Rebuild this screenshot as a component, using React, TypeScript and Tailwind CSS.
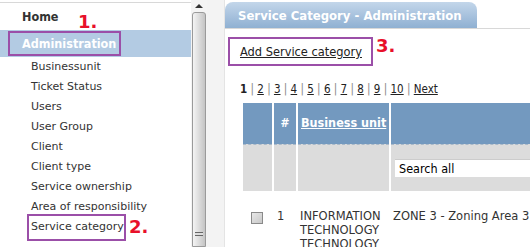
import React from 'react';

const menuItems = [
  'Businessunit',
  'Ticket Status',
  'Users',
  'User Group',
  'Client',
  'Client type',
  'Service ownership',
  'Area of responsibility',
  'Service category',
];

const pages = ['2', '3', '4', '5', '6', '7', '8', '9', '10'];

const condensed = { fontFamily: '"DejaVu Sans Condensed", "DejaVu Sans", Verdana, sans-serif' };

export default function App() {
  return (
    <div
      className="relative flex h-[247px] w-[530px] overflow-hidden bg-white text-[#333]"
      style={{ fontFamily: '"DejaVu Sans", Verdana, sans-serif' }}
    >
      {/* sidebar */}
      <div className="w-[191px] shrink-0 pt-[2px]">
        <div className="border-t border-[#d8d8d8]">
          <div
            className="pl-[22px] pt-[6px] pb-[5px] text-[12.5px] font-bold leading-[16px] text-[#333]"
            style={condensed}
          >
            Home
          </div>
          <div
            className="bg-[#b3cbe3] py-[5px] pl-[22px] text-[12.5px] font-bold leading-[17px] text-white"
            style={condensed}
          >
            Administration
          </div>
          <ul>
            {menuItems.map((item) => (
              <li key={item} className="pl-[31px] text-[11px] leading-[20px] text-[#333]">
                {item}
              </li>
            ))}
          </ul>
        </div>
      </div>

      {/* scrollbar */}
      <div className="flex w-[16px] shrink-0 flex-col bg-[#f4f4f4]">
        <div className="flex h-[12px] items-center justify-center">
          <div className="h-0 w-0 border-x-[4px] border-b-[4px] border-x-transparent border-b-[#333]" />
        </div>
        <div className="mx-[1px] flex flex-1 flex-col justify-end rounded-t-[3px] border border-[#9a9a9a] bg-gradient-to-r from-[#f4f4f4] via-[#dcdcdc] to-[#c4c4c4] pb-[10px]">
          <div className="mx-auto h-[4px] w-[8px] border-y border-[#666] bg-[#ddd]" />
        </div>
      </div>

      {/* gutter */}
      <div className="w-[18px] shrink-0 border-r border-[#e4e4e4] bg-[#f3f3f3]" />

      {/* main panel */}
      <div className="flex-1 pt-[2px]">
        <div className="flex">
          <div
            className="w-[252px] rounded-t-[8px] bg-gradient-to-b from-[#c3d6ea] to-[#8fb0d2] pl-[13px] pt-[6px] pb-[4px] text-[13px] font-bold leading-[16px] text-white"
            style={condensed}
          >
            Service Category - Administration
          </div>
        </div>
        <div className="border-t border-[#d8d8d8] pl-[15px] pt-[10px]">
          <a className="text-[12.7px] leading-[16px] text-[#222] underline" style={condensed}>
            Add Service category
          </a>

          <div className="mt-[18px] text-[11.5px] leading-[16px] text-[#222]" style={condensed}>
            <span className="font-bold">1</span>
            {pages.map((p) => (
              <span key={p}>
                <span className="text-[#888]"> | </span>
                <a className="underline">{p}</a>
              </span>
            ))}
            <span className="text-[#888]"> | </span>
            <a className="underline">Next</a>
          </div>

          <table className="mt-[6px] ml-[3px] w-[300px] table-fixed border-collapse text-[11.5px]">
            <colgroup>
              <col className="w-[30px]" />
              <col className="w-[24px]" />
              <col className="w-[93px]" />
              <col />
            </colgroup>
            <thead>
              <tr className="h-[41px] bg-[#7399bf] text-white" style={condensed}>
                <th className="border-r-2 border-white" />
                <th className="border-r-2 border-white text-[12px] font-bold">#</th>
                <th className="border-r-2 border-white pl-[3px] text-left text-[12.5px] font-bold underline">
                  Business unit
                </th>
                <th />
              </tr>
              <tr className="h-[48px] border-t border-dashed border-[#a9b9c9] bg-[#dcdcdc]">
                <td className="border-r-2 border-white" />
                <td className="border-r-2 border-white" />
                <td className="border-r-2 border-white" />
                <td className="pl-[4px] align-middle">
                  <div
                    className="h-[18px] w-[200px] border-t border-[#ccc] bg-white pl-[4px] text-[12.5px] leading-[18px] text-black"
                    style={condensed}
                  >
                    Search all
                  </div>
                </td>
              </tr>
            </thead>
            <tbody>
              <tr className="border-t-2 border-white align-top">
                <td className="pl-[8px] pt-[19px]">
                  <div className="h-[12px] w-[12px] border border-[#8a8a8a] bg-gradient-to-br from-[#e8e8e8] to-[#c8c8c8]" />
                </td>
                <td className="pl-[4px] pt-[16px] leading-[14px]">1</td>
                <td className="pl-[3px] pt-[16px] leading-[14px]">
                  INFORMATION
                  <br />
                  TECHNOLOGY
                  <br />
                  TECHNOLOGY
                </td>
                <td className="pl-[3px] pt-[16px] leading-[14px] whitespace-nowrap">ZONE 3 - Zoning Area 3</td>
              </tr>
            </tbody>
          </table>
        </div>
      </div>

      {/* annotations */}
      <div className="pointer-events-none absolute left-[8px] top-[31px] h-[25px] w-[113px] border-2 border-[#9b4fa8]" />
      <div className="pointer-events-none absolute left-[78px] top-[12px] text-[18px] font-bold leading-[20px] text-[#e8102a]">
        1.
      </div>
      <div className="pointer-events-none absolute left-[27px] top-[214px] h-[27px] w-[99px] border-2 border-[#9b4fa8]" />
      <div className="pointer-events-none absolute left-[129px] top-[217px] text-[18px] font-bold leading-[20px] text-[#e8102a]">
        2.
      </div>
      <div className="pointer-events-none absolute left-[228px] top-[37px] h-[29px] w-[145px] border-2 border-[#9b4fa8]" />
      <div className="pointer-events-none absolute left-[376px] top-[36px] text-[18px] font-bold leading-[20px] text-[#e8102a]">
        3.
      </div>
    </div>
  );
}
